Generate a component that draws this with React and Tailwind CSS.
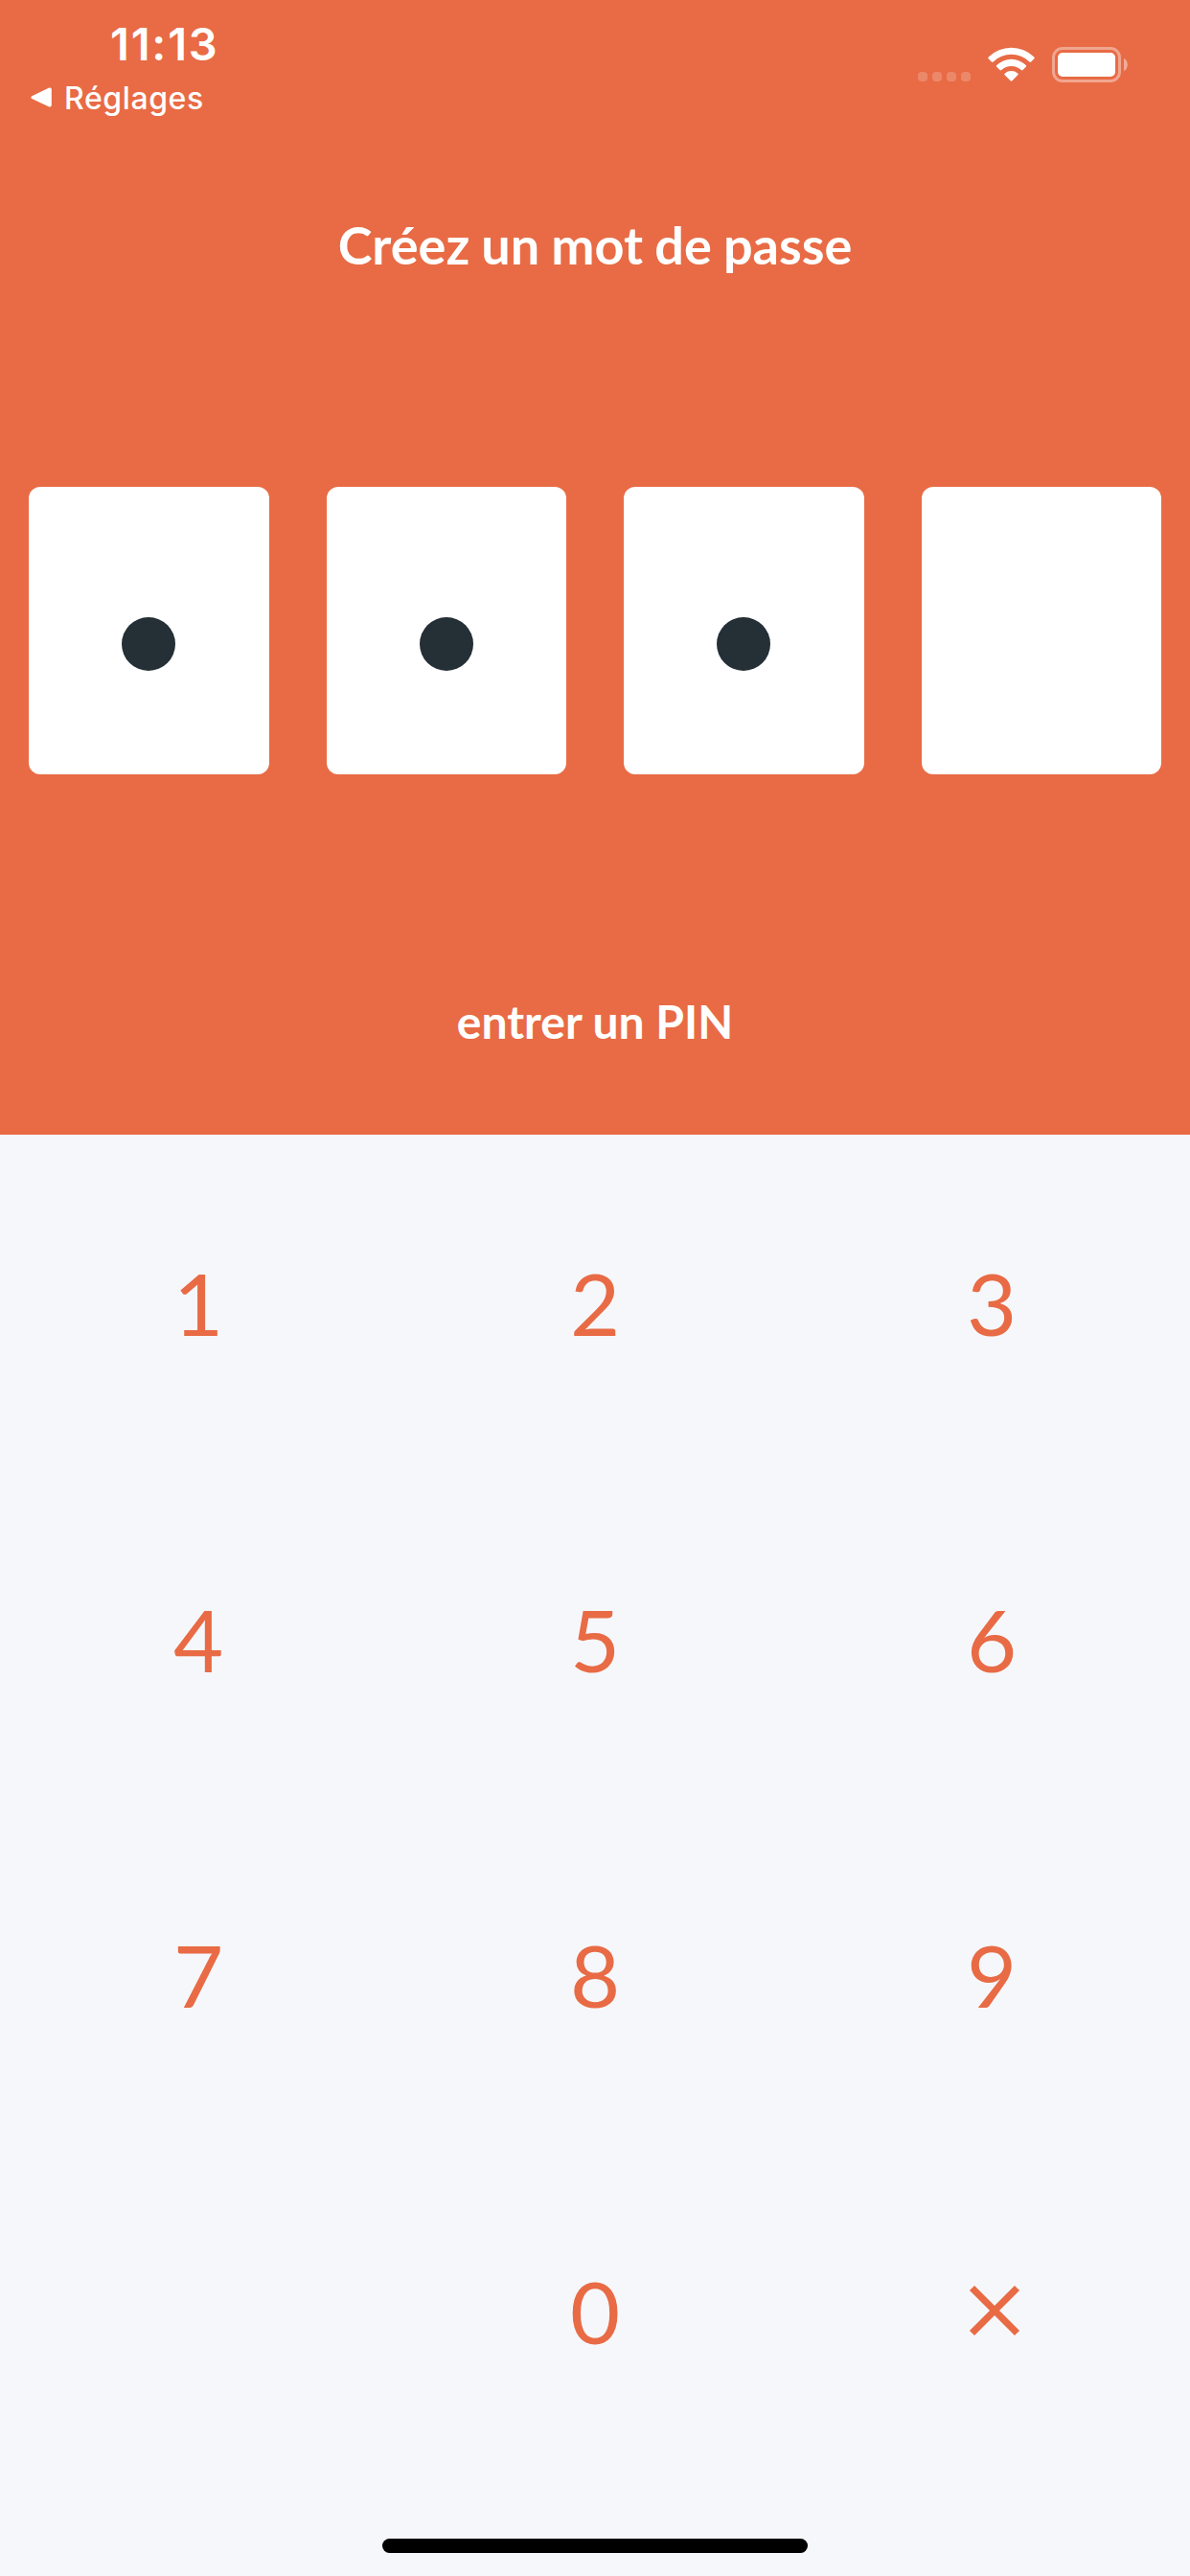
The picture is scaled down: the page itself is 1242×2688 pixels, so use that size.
const pin = [true, true, true, false];
const keys = ["1", "2", "3", "4", "5", "6", "7", "8", "9", "", "0", "x"];

function StatusBar() {
  return (
    <div className="flex h-[132px] justify-between font-['Inter',sans-serif] text-white">
      <div className="pl-[32px] pt-[22px]">
        <div className="pl-[83px] text-[47px] font-semibold leading-[48px] tracking-[1.8px]">11:13</div>
        <div className="mt-[13px] flex items-center gap-[12px]">
          <svg className="-mt-[2px]" width="23" height="22" viewBox="0 0 23 22" fill="currentColor">
            <path d="M1.3 9.3 18.8.8Q21.8-.2 21.8 2.6V18.4Q21.8 21.4 18.8 20.2L1.3 12Q-.6 10.6 1.3 9.3Z" />
          </svg>
          <span className="text-[32px] font-medium leading-[40px] tracking-[0.6px]">Réglages</span>
        </div>
      </div>
      <div className="flex items-start pr-[64px] pt-[49px]">
        <div className="mt-[26px] flex gap-[5px]">
          {[0, 1, 2, 3].map((i) => (
            <span key={i} className="size-[10px] rounded-[4px] bg-white/20" />
          ))}
        </div>
        <svg className="ml-[18px]" width="49" height="36" viewBox="0 0 49 36" fill="currentColor">
          <path d="M.7 10.4a34 34 0 0 1 47.6 0q.9.9 0 1.8l-3.1 3.2q-.9.8-1.8 0a27.3 27.3 0 0 0-37.8 0q-.9.8-1.8 0L.7 12.2q-.9-.9 0-1.8Z" />
          <path d="M9.2 18.9a22.3 22.3 0 0 1 30.6 0q.9.9 0 1.8l-3.3 3.3q-.9.8-1.8 0a15.1 15.1 0 0 0-20.4 0q-.9.8-1.8 0l-3.3-3.3q-.9-.9 0-1.8Z" />
          <path d="M17.8 27.5a10.4 10.4 0 0 1 13.4 0q1 .9.1 1.8l-5.9 6q-.9.9-1.8 0l-5.9-6q-.9-.9.1-1.8Z" />
        </svg>
        <svg className="ml-[18px]" width="80" height="37" viewBox="0 0 80 37">
          <rect x="1.5" y="1.5" width="69" height="34" rx="9.5" fill="none" stroke="#fff" strokeOpacity=".4" strokeWidth="3" />
          <rect x="6" y="6" width="60" height="25" rx="5" fill="#fff" />
          <path d="M75 12v13c5-2 5-11 0-13Z" fill="#fff" fillOpacity=".45" />
        </svg>
      </div>
    </div>
  );
}

export default function App() {
  return (
    <main className="flex h-[2688px] w-[1242px] flex-col bg-[#f6f7fb] font-['Lato',sans-serif]">
      <section className="h-[1184px] bg-[#e86b45] text-center text-white">
        <StatusBar />
        <h1 className="mt-[92px] text-[54px] font-bold leading-[64px] [word-spacing:-1px]">Créez un mot de passe</h1>
        <div className="mt-[220px] grid grid-cols-4 gap-[60px] px-[30px]">
          {pin.map((filled, i) => (
            <div key={i} className="flex h-[300px] justify-center rounded-[12px] bg-white pt-[136px]">
              {filled && <span className="size-[56px] rounded-full bg-[#242f36]" />}
            </div>
          ))}
        </div>
        <p className="mt-[228px] text-[48px] font-bold leading-[60px]">entrer un PIN</p>
      </section>
      <section className="grid grid-cols-3 text-[90px] leading-none text-[#e86b45]">
        {keys.map((key) => (
          <div key={key} className="flex h-[350.5px] items-center justify-center">
            {key === "x" ? (
              <svg className="ml-[6px] mt-[1px]" width="54" height="54" viewBox="0 0 54 54" fill="none" stroke="currentColor" strokeWidth="7.2">
                <path d="M3.5 3.5 50.5 50.5M50.5 3.5 3.5 50.5" />
              </svg>
            ) : (
              key
            )}
          </div>
        ))}
      </section>
      <div className="mx-auto mt-[63px] h-[15px] w-[444px] rounded-full bg-black" />
    </main>
  );
}
